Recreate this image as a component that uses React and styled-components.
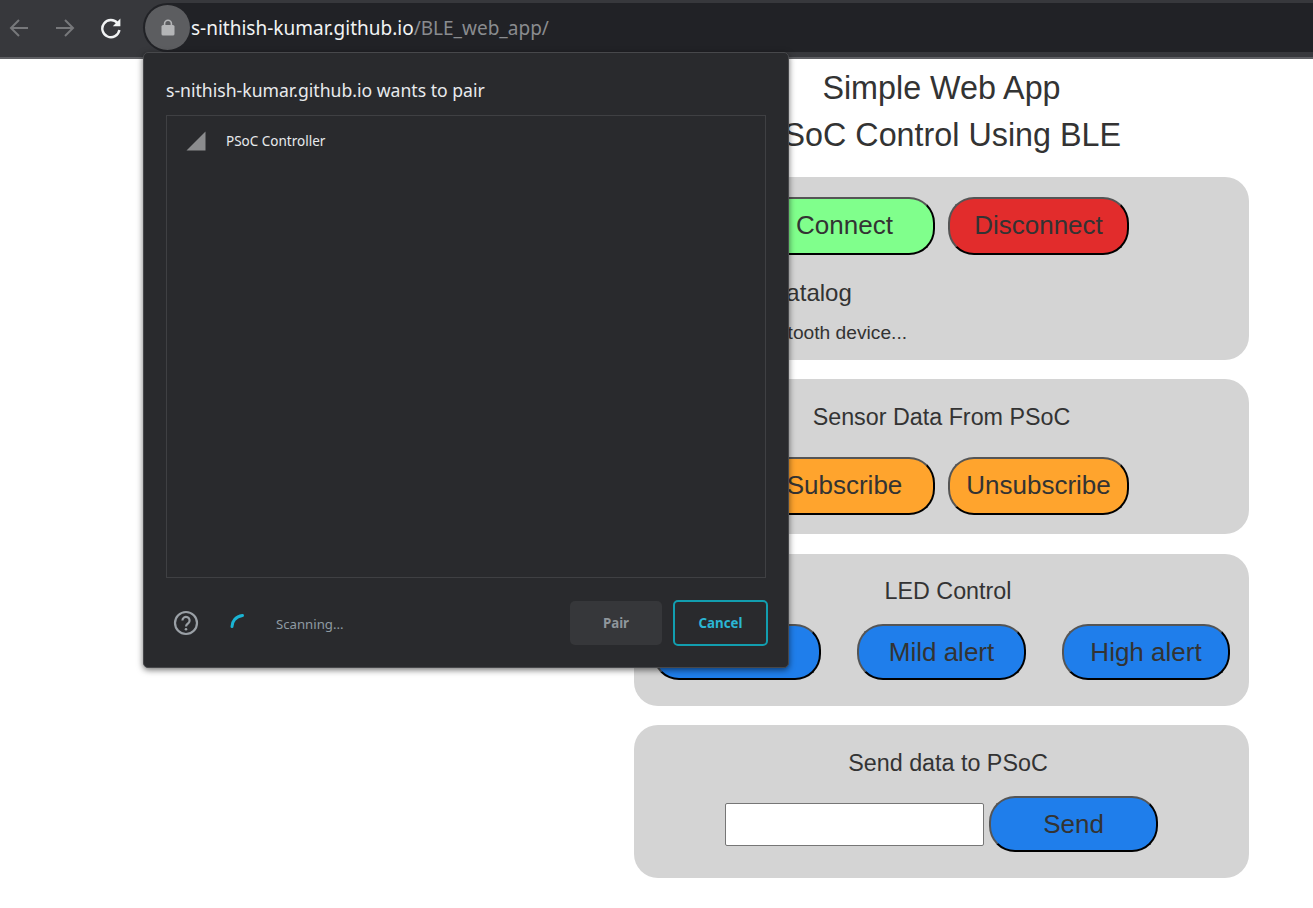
import React from 'react';
import styled, { createGlobalStyle } from 'styled-components';

const GlobalStyle = createGlobalStyle`
  html, body {
    margin: 0;
    padding: 0;
    background: #fff;
    overflow: hidden;
  }
`;

const BackIcon = () => (
  <svg width="20" height="20" viewBox="0 0 20 20" fill="none" stroke="currentColor" strokeWidth="2">
    <path d="M19 10H2M10 2l-8 8 8 8" />
  </svg>
);

const ForwardIcon = () => (
  <svg width="20" height="20" viewBox="0 0 20 20" fill="none" stroke="currentColor" strokeWidth="2">
    <path d="M1 10h17M10 2l8 8-8 8" />
  </svg>
);

const ReloadIcon = () => (
  <svg width="22" height="22" viewBox="0 0 22 22">
    <path d="M17.6 6.2A8.6 8.6 0 1 0 19.4 13" fill="none" stroke="currentColor" strokeWidth="2.4" />
    <path d="M20.4 1.6v7.6h-7.6z" fill="currentColor" />
  </svg>
);

const LockIcon = () => (
  <svg width="14" height="17" viewBox="0 0 14 17">
    <path d="M3.6 7V4.6a3.4 3.4 0 0 1 6.8 0V7" fill="none" stroke="currentColor" strokeWidth="1.6" />
    <rect x="0.5" y="6" width="13" height="10.5" rx="1.6" fill="currentColor" />
  </svg>
);

const SignalIcon = () => (
  <svg width="20" height="20" viewBox="0 0 20 20">
    <path d="M19.5 0.5V19.5H0.5z" fill="#8b8c8e" />
  </svg>
);

const HelpIcon = () => (
  <svg width="26" height="26" viewBox="0 0 26 26" fill="none" stroke="#9aa0a6">
    <circle cx="13" cy="13" r="11" strokeWidth="2.2" />
    <path d="M9.4 10.4a3.6 3.6 0 1 1 5.8 2.9c-1.3 1-2.2 1.6-2.2 3.2" strokeWidth="2.2" />
    <circle cx="13" cy="19.2" r="1.3" fill="#9aa0a6" stroke="none" />
  </svg>
);

const SpinnerIcon = () => (
  <svg width="16" height="16" viewBox="0 0 16 16" fill="none">
    <path d="M2 13.5C2 8.5 5.5 3.5 12.5 2.5" stroke="#1ab4d3" strokeWidth="3" strokeLinecap="round" />
  </svg>
);

const App = () => {
  return (
    <>
      <GlobalStyle />
      <TopBar>
        <NavButton $color="#77787b"><BackIcon /></NavButton>
        <NavButton $color="#77787b"><ForwardIcon /></NavButton>
        <NavButton $color="#f1f3f4"><ReloadIcon /></NavButton>
        <Omnibox>
          <LockCircle><LockIcon /></LockCircle>
          <UrlHost>s-nithish-kumar.github.io</UrlHost>
          <UrlPath>/BLE_web_app/</UrlPath>
        </Omnibox>
      </TopBar>

      <Page>
        <Title>Simple Web App</Title>
        <Title>PSoC Control Using BLE</Title>

        <ConnectCard>
          <ButtonRow>
            <PillButton $bg="#80ff8c">Connect</PillButton>
            <PillButton $bg="#e22c2c">Disconnect</PillButton>
          </ButtonRow>
          <CatalogLine>Device Catalog</CatalogLine>
          <StatusLine>Waiting for bluetooth device...</StatusLine>
        </ConnectCard>

        <SensorCard>
          <CardHeading>Sensor Data From PSoC</CardHeading>
          <ButtonRow>
            <PillButton $bg="#ffa42d">Subscribe</PillButton>
            <PillButton $bg="#ffa42d">Unsubscribe</PillButton>
          </ButtonRow>
        </SensorCard>

        <LedCard>
          <OffsetHeading>LED Control</OffsetHeading>
          <LedRow>
            <PillButton $bg="#1f7eeb" $width="168px" $height="56px">No alert</PillButton>
            <PillButton $bg="#1f7eeb" $width="169px" $height="56px">Mild alert</PillButton>
            <PillButton $bg="#1f7eeb" $width="168px" $height="56px">High alert</PillButton>
          </LedRow>
        </LedCard>

        <SendCard>
          <OffsetHeading>Send data to PSoC</OffsetHeading>
          <SendRow>
            <DataInput type="text" />
            <PillButton $bg="#1f7eeb" $width="169px" $height="56px">Send</PillButton>
          </SendRow>
        </SendCard>
      </Page>

      <PairDialog>
        <DialogTitle>s-nithish-kumar.github.io wants to pair</DialogTitle>
        <DeviceList>
          <DeviceRow>
            <SignalIcon />
            <DeviceName>PSoC Controller</DeviceName>
          </DeviceRow>
        </DeviceList>
        <DialogFooter>
          <HelpSlot><HelpIcon /></HelpSlot>
          <SpinnerSlot><SpinnerIcon /></SpinnerSlot>
          <ScanText>Scanning...</ScanText>
          <PairButton>Pair</PairButton>
          <CancelButton>Cancel</CancelButton>
        </DialogFooter>
      </PairDialog>
    </>
  );
};

export default App;

const TopBar = styled.div`
  height: 57px;
  background: #37383c;
  border-bottom: 2px solid #5f6064;
  display: flex;
  align-items: flex-start;
  overflow: hidden;
`;

const NavButton = styled.div`
  width: 38px;
  height: 55px;
  margin-right: 8px;
  display: flex;
  align-items: center;
  justify-content: center;
  color: ${props => props.$color};
`;

const Omnibox = styled.div`
  flex: 1;
  height: 49px;
  margin: 3px 0 0 5px;
  border-radius: 25px 0 0 25px;
  background: #212226;
  display: flex;
  align-items: center;
  padding-left: 2px;
  font-family: "Noto Sans", sans-serif;
  font-size: 19px;
`;

const LockCircle = styled.div`
  width: 45px;
  height: 45px;
  border-radius: 50%;
  background: #5c5d60;
  color: #b4b5b7;
  display: flex;
  align-items: center;
  justify-content: center;
  margin-right: 1px;
`;

const UrlHost = styled.span`
  color: #f1f3f4;
`;

const UrlPath = styled.span`
  color: #8a8c8f;
`;

const Page = styled.div`
  width: 615px;
  margin-left: 634px;
  padding-top: 6px;
  font-family: "Liberation Sans", Arial, sans-serif;
  color: #333;
`;

const Title = styled.div`
  font-size: 32.3px;
  line-height: 47px;
  text-align: center;
`;

const Card = styled.div`
  background: #d4d4d4;
  border-radius: 24px;
  box-sizing: border-box;
  margin-bottom: 19px;
`;

const ConnectCard = styled(Card)`
  height: 183px;
  margin-top: 18px;
  padding-top: 20px;
`;

const SensorCard = styled(Card)`
  height: 155px;
  padding-top: 23px;
`;

const LedCard = styled(Card)`
  height: 152px;
  margin-top: 20px;
  padding-top: 23px;
`;

const SendCard = styled(Card)`
  height: 153px;
  padding-top: 24px;
`;

const ButtonRow = styled.div`
  display: flex;
  justify-content: center;
  gap: 13px;
`;

const LedRow = styled.div`
  display: flex;
  gap: 36px;
  padding-left: 19px;
  margin-top: 19px;
`;

const SendRow = styled.div`
  display: flex;
  align-items: center;
  gap: 5px;
  padding-left: 91px;
  margin-top: 19px;
`;

const PillButton = styled.button`
  width: ${props => props.$width || '181px'};
  height: ${props => props.$height || '58px'};
  padding: 0 0 ${props => (props.$height ? '0' : '2px')};
  box-sizing: border-box;
  border-radius: 26px;
  border-width: 2px;
  border-style: solid;
  border-color: #555 #000 #000 #555;
  background: ${props => props.$bg};
  color: #333;
  font-family: "Liberation Sans", Arial, sans-serif;
  font-size: 26px;
  text-align: center;
`;

const CatalogLine = styled.div`
  font-size: 24px;
  line-height: 28px;
  padding-left: 55px;
  margin-top: 24px;
`;

const StatusLine = styled.div`
  font-size: 19.2px;
  line-height: 22px;
  padding-left: 21px;
  margin-top: 15px;
`;

const CardHeading = styled.div`
  font-size: 23.3px;
  line-height: 30px;
  text-align: center;
  margin-bottom: 25px;
`;

const OffsetHeading = styled.div`
  font-size: 23.3px;
  line-height: 28px;
  text-align: center;
  padding-left: 13px;
`;

const DataInput = styled.input`
  width: 259px;
  height: 43px;
  box-sizing: border-box;
  padding: 0;
  border: 1px solid #767676;
  border-radius: 2px;
  background: #fff;
`;

const PairDialog = styled.div`
  position: absolute;
  top: 52px;
  left: 143px;
  width: 646px;
  height: 616px;
  box-sizing: border-box;
  padding: 0 22px;
  background: #292a2d;
  border: 1px solid #47484b;
  border-radius: 5px;
  box-shadow: 0 2px 6px rgba(0, 0, 0, 0.55);
  font-family: "Noto Sans", sans-serif;
  display: flex;
  flex-direction: column;
`;

const DialogTitle = styled.div`
  height: 62px;
  line-height: 75px;
  font-size: 17.6px;
  color: #e8eaed;
`;

const DeviceList = styled.div`
  height: 463px;
  box-sizing: border-box;
  border: 1px solid #3f4043;
  padding: 15px 19px;
`;

const DeviceRow = styled.div`
  display: flex;
  align-items: center;
  gap: 20px;
  height: 20px;
`;

const DeviceName = styled.span`
  font-size: 13.5px;
  color: #e8eaed;
`;

const DialogFooter = styled.div`
  flex: 1;
  display: flex;
  align-items: center;
  margin-right: -2px;
  padding-top: 22px;
  padding-bottom: 21px;
  box-sizing: border-box;
`;

const HelpSlot = styled.div`
  width: 26px;
  height: 26px;
  margin-left: 7px;
`;

const SpinnerSlot = styled.div`
  width: 16px;
  height: 16px;
  margin: 0 0 6px 31px;
`;

const ScanText = styled.span`
  flex: 1;
  margin-left: 30px;
  padding-top: 2px;
  font-size: 13.2px;
  color: #8f9ba3;
`;

const FooterButton = styled.div`
  box-sizing: border-box;
  display: flex;
  align-items: center;
  justify-content: center;
  border-radius: 5px;
  font-size: 13.3px;
  font-weight: 700;
`;

const PairButton = styled(FooterButton)`
  width: 92px;
  height: 44px;
  background: #36373a;
  color: #8f969c;
`;

const CancelButton = styled(FooterButton)`
  width: 95px;
  height: 46px;
  margin-left: 11px;
  border: 2px solid #129eaf;
  color: #2bb6d4;
`;
